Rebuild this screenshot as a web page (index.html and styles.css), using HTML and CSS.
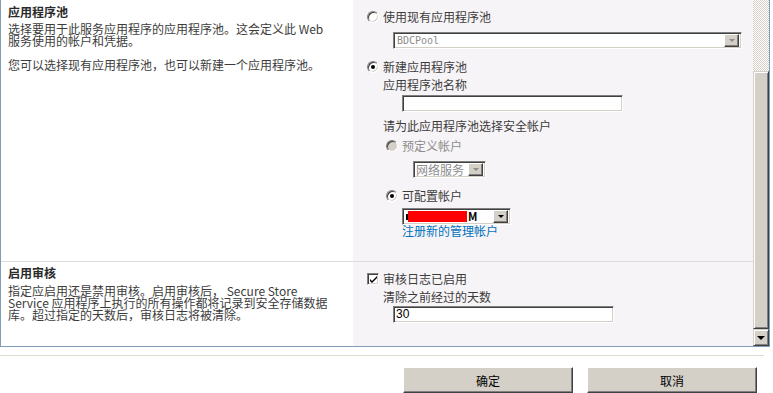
FILE: index.html
```html
<!DOCTYPE html>
<html lang="zh-CN">
<head>
    <meta charset="UTF-8">
    <title>Secure Store Service</title>
    <link rel="stylesheet" href="styles.css">
</head>
<body>
    <div class="frame">
        <div class="content">
            <div class="section pool">
                <div class="info">
                    <h3>应用程序池</h3>
                    <p>选择要用于此服务应用程序的应用程序池。这会定义此 Web<br>服务使用的帐户和凭据。</p>
                    <p class="para">您可以选择现有应用程序池，也可以新建一个应用程序池。</p>
                </div>
                <div class="fields">
                    <div class="opt first"><span class="radio"></span>使用现有应用程序池</div>
                    <div class="select pool-select disabled"><span class="val mono">BDCPool</span><span class="arrow"></span></div>
                    <div class="opt second"><span class="radio checked"></span>新建应用程序池</div>
                    <div class="label name-label">应用程序池名称</div>
                    <div class="textbox name-box"></div>
                    <div class="label account-label">请为此应用程序池选择安全帐户</div>
                    <div class="opt sub predefined off"><span class="radio disabled"></span>预定义帐户</div>
                    <div class="select net-select disabled"><span class="val">网络服务</span><span class="arrow"></span></div>
                    <div class="opt sub configurable"><span class="radio checked"></span>可配置帐户</div>
                    <div class="select acct-select"><span class="val"><span class="mark"></span><span class="redact"></span>M</span><span class="arrow"></span></div>
                    <a class="link" href="#">注册新的管理帐户</a>
                </div>
            </div>
            <div class="section audit">
                <div class="info">
                    <h3>启用审核</h3>
                    <p>指定应启用还是禁用审核。启用审核后， Secure Store<br>Service 应用程序上执行的所有操作都将记录到安全存储数据<br>库。超过指定的天数后，审核日志将被清除。</p>
                </div>
                <div class="fields">
                    <div class="opt check-row"><span class="checkbox"><svg width="9" height="9" viewBox="0 0 9 9"><path d="M1 4 L3 6 L8 1 L8 3 L3 8 L1 6 Z" fill="#000"/></svg></span>审核日志已启用</div>
                    <div class="label days-label">清除之前经过的天数</div>
                    <div class="textbox days-box">30</div>
                </div>
            </div>
        </div>
        <div class="scrollbar">
            <div class="track"></div>
            <div class="thumb"></div>
            <div class="btn-down"><span class="tri"></span></div>
        </div>
    </div>
    <div class="rule"></div>
    <div class="actions">
        <button class="btn">确定</button>
        <button class="btn">取消</button>
    </div>
</body>
</html>
```

FILE: styles.css
```css
body {
    margin: 0;
    background-color: #fff;
    font-family: "Noto Sans CJK SC", "Noto Sans", sans-serif;
    font-size: 12px;
    color: #3c3c3c;
    overflow: hidden;
}

.frame {
    display: flex;
    width: 768px;
    height: 346px;
    border: 1px solid #7f9db9;
    border-top: none;
}

.content {
    width: 752px;
    overflow: hidden;
}

.section {
    display: grid;
    grid-template-columns: 352px 1fr;
}

.pool {
    height: 261px;
    border-bottom: 1px solid #dcdcdc;
}

.audit {
    height: 84px;
}

.info {
    padding-left: 7px;
}

.info h3 {
    margin: 0;
    font-size: 12px;
    line-height: 14px;
    font-weight: bold;
    color: #2a2a2a;
}

.pool .info h3 {
    padding-top: 5px;
}

.audit .info h3 {
    padding-top: 4px;
}

.info p {
    margin: 4px 0 0;
    line-height: 12px;
    font-size: 12px;
}

.audit .info p {
    margin-top: 5px;
}

.info p.para {
    margin-top: 12px;
}

.fields {
    background-color: #f7f4f7;
    padding-left: 14px;
}

.opt {
    display: flex;
    align-items: center;
    height: 14px;
    line-height: 14px;
}

.radio {
    position: relative;
    width: 12px;
    height: 12px;
    box-sizing: border-box;
    margin-right: 4px;
    border-radius: 50%;
    border: 1px solid;
    border-color: #808080 #fff #fff #808080;
    box-shadow: inset 1px 1px #404040, inset -1px -1px #d4d0c8;
    background-color: #fff;
}

.radio.checked::after {
    content: "";
    position: absolute;
    left: 3px;
    top: 3px;
    width: 4px;
    height: 4px;
    border-radius: 50%;
    background-color: #000;
}

.radio.disabled {
    background-color: #d4d0c8;
}

.opt.first {
    margin-top: 10px;
}

.opt.second {
    margin-top: 11px;
}

.opt.sub {
    padding-left: 19px;
}

.opt.off {
    color: #8c8c8c;
}

.predefined {
    margin-top: 6px;
}

.configurable {
    margin-top: 11px;
}

.label {
    padding-left: 16px;
    line-height: 14px;
}

.name-label {
    margin-top: 4px;
}

.account-label {
    margin-top: 7px;
}

.select,
.textbox {
    box-sizing: border-box;
    height: 17px;
    border: 1px solid;
    border-color: #808080 #fff #fff #808080;
    box-shadow: inset 1px 1px #404040, inset -1px -1px #d4d0c8;
    background-color: #fff;
}

.select {
    display: flex;
    align-items: center;
    justify-content: space-between;
    padding: 2px 2px 2px 3px;
}

.select .val {
    display: flex;
    align-items: center;
    line-height: 13px;
    white-space: nowrap;
}

.select.disabled .val {
    color: #8c8c8c;
}

.mono {
    font-family: "DejaVu Sans Mono", monospace;
    font-size: 10px;
}

.arrow {
    position: relative;
    width: 15px;
    height: 13px;
    box-sizing: border-box;
    border: 1px solid;
    border-color: #fff #404040 #404040 #fff;
    box-shadow: inset -1px -1px #808080;
    background-color: #d4d0c8;
}

.arrow::after {
    content: "";
    position: absolute;
    left: 4px;
    top: 4px;
    border-left: 3px solid transparent;
    border-right: 3px solid transparent;
    border-top: 3px solid #000;
}

.disabled .arrow::after {
    border-top-color: #8c8c8c;
}

.pool-select {
    width: 349px;
    margin: 8px 0 0 26px;
}

.name-box {
    width: 221px;
    margin: 3px 0 0 35px;
}

.net-select {
    width: 73px;
    margin: 8px 0 0 46px;
    padding-left: 2px;
}

.acct-select {
    width: 109px;
    margin: 5px 0 0 35px;
}

.mark {
    width: 2px;
    height: 6px;
    background-color: #000;
}

.redact {
    display: inline-block;
    width: 59px;
    height: 11px;
    background-color: #ff0000;
    margin-right: 1px;
}

.acct-select .val {
    color: #000;
    font-size: 11px;
    font-weight: bold;
}

.link {
    display: block;
    margin-left: 35px;
    line-height: 12px;
    color: #0072bc;
    text-decoration: none;
}

.check-row {
    margin-top: 10px;
}

.checkbox {
    display: flex;
    align-items: center;
    justify-content: center;
    width: 12px;
    height: 12px;
    box-sizing: border-box;
    margin-right: 4px;
    border: 1px solid;
    border-color: #808080 #fff #fff #808080;
    box-shadow: inset 1px 1px #404040, inset -1px -1px #d4d0c8;
    background-color: #fff;
}

.days-label {
    margin-top: 4px;
}

.days-box {
    width: 221px;
    margin: 2px 0 0 26px;
    padding-left: 2px;
    font-family: "Liberation Sans", sans-serif;
    line-height: 15px;
    color: #000;
}

.scrollbar {
    display: flex;
    flex-direction: column;
    width: 16px;
}

.track {
    height: 71px;
    background: repeating-conic-gradient(#d4d0c8 0 25%, #fff 0 50%) 0 0 / 2px 2px;
}

.thumb,
.btn-down {
    box-sizing: border-box;
    border: 1px solid;
    border-color: #d4d0c8 #404040 #404040 #d4d0c8;
    box-shadow: inset 1px 1px #fff, inset -1px -1px #808080;
    background-color: #d4d0c8;
}

.thumb {
    height: 258px;
}

.btn-down {
    position: relative;
    height: 17px;
}

.tri {
    position: absolute;
    left: 3px;
    top: 6px;
    border-left: 4px solid transparent;
    border-right: 4px solid transparent;
    border-top: 4px solid #000;
}

.rule {
    width: 764px;
    height: 1px;
    margin-top: 8px;
    background-color: #dedbd0;
}

.actions {
    display: flex;
    gap: 14px;
    margin: 11px 0 0 403px;
}

.btn {
    width: 170px;
    height: 26px;
    box-sizing: border-box;
    border: 1px solid;
    border-color: #fff #404040 #404040 #fff;
    box-shadow: inset -1px -1px #808080;
    background-color: #d4d0c8;
    font-family: "Noto Sans CJK SC", sans-serif;
    font-size: 12px;
    color: #000;
    padding: 0;
}
```
